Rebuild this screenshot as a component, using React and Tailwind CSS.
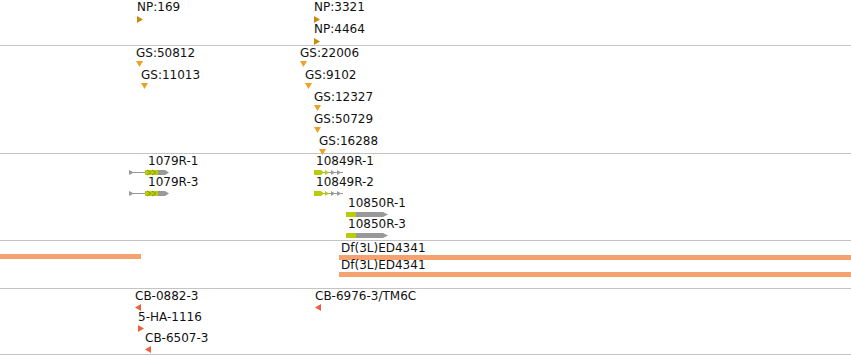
const font = { fontFamily: '"DejaVu Sans", sans-serif' }

const np = [
  { x: 137, y: 0, label: 'NP:169' },
  { x: 314, y: 0, label: 'NP:3321' },
  { x: 314, y: 22, label: 'NP:4464' }
]

const gs = [
  { x: 136, y: 0, label: 'GS:50812' },
  { x: 141, y: 22, label: 'GS:11013' },
  { x: 300, y: 0, label: 'GS:22006' },
  { x: 305, y: 22, label: 'GS:9102' },
  { x: 314, y: 44, label: 'GS:12327' },
  { x: 314, y: 66, label: 'GS:50729' },
  { x: 319, y: 88, label: 'GS:16288' }
]

const genes = [
  { x: 129, y: 0, label: '1079R-1', kind: 'a' },
  { x: 129, y: 21, label: '1079R-3', kind: 'a' },
  { x: 314, y: 0, label: '10849R-1', kind: 'b' },
  { x: 314, y: 21, label: '10849R-2', kind: 'b' },
  { x: 346, y: 42, label: '10850R-1', kind: 'c' },
  { x: 346, y: 63, label: '10850R-3', kind: 'c' }
]

const alleles = [
  { x: 135, y: 0, label: 'CB-0882-3', dir: 'left' },
  { x: 138, y: 21, label: '5-HA-1116', dir: 'right' },
  { x: 145, y: 42, label: 'CB-6507-3', dir: 'left' },
  { x: 315, y: 0, label: 'CB-6976-3/TM6C', dir: 'left' }
]

function Label({ children, className = '' }) {
  return <div className={`whitespace-nowrap text-[12px] leading-[14px] text-[#111] ${className}`}>{children}</div>
}

function RightTri({ color }) {
  return (
    <svg width="6" height="7" viewBox="0 0 6 7">
      <path d="M0 0 L6 3.5 L0 7 Z" fill={color} />
    </svg>
  )
}

function LeftTri({ color }) {
  return (
    <svg width="6" height="7" viewBox="0 0 6 7">
      <path d="M6 0 L0 3.5 L6 7 Z" fill={color} />
    </svg>
  )
}

function DownTri({ color }) {
  return (
    <svg width="7" height="6" viewBox="0 0 7 6">
      <path d="M0 0 L7 0 L3.5 6 Z" fill={color} />
    </svg>
  )
}

function GeneGlyph({ kind }) {
  if (kind === 'a') {
    return (
      <svg width="42" height="7" viewBox="0 0 42 7">
        <path d="M0 1 L5 3.5 L0 6 Z" fill="#999" />
        <rect x="3" y="3" width="14" height="1" fill="#999" />
        <rect x="16" y="1" width="13" height="5" fill="#b9cc0a" />
        <path d="M18 1 L22 3.5 L18 6 M23 1 L27 3.5 L23 6" stroke="#8a9a00" strokeWidth="1" fill="none" />
        <path d="M29 1 L36 1 L40 3.5 L36 6 L29 6 Z" fill="#999" />
      </svg>
    )
  }
  if (kind === 'b') {
    return (
      <svg width="30" height="7" viewBox="0 0 30 7">
        <path d="M0 1 L7 1 L10 3.5 L7 6 L0 6 Z" fill="#b9cc0a" />
        <rect x="9" y="3" width="20" height="1" fill="#999" />
        <path d="M11 1 L15 3.5 L11 6 Z" fill="#b9cc0a" />
        <path d="M17 1 L21 3.5 L17 6 Z M23 1 L27 3.5 L23 6 Z" fill="#999" />
      </svg>
    )
  }
  return (
    <svg width="44" height="7" viewBox="0 0 44 7">
      <rect x="0" y="1" width="10" height="5" fill="#b9cc0a" />
      <path d="M10 1 L37 1 L42 3.5 L37 6 L10 6 Z" fill="#999" />
    </svg>
  )
}

function Track({ h, children }) {
  return <div className={`relative border-b border-[#c4c4c4] ${h}`}>{children}</div>
}

export default function App() {
  return (
    <div className="h-[355px] w-[851px] overflow-hidden bg-white" style={font}>
      <Track h="h-[46px]">
        {np.map((f) => (
          <div key={f.label} className="absolute flex flex-col" style={{ left: f.x, top: f.y }}>
            <Label>{f.label}</Label>
            <div className="mt-[2px]">
              <RightTri color="#c98b0c" />
            </div>
          </div>
        ))}
      </Track>

      <Track h="h-[108px]">
        {gs.map((f) => (
          <div key={f.label} className="absolute flex flex-col" style={{ left: f.x, top: f.y }}>
            <Label>{f.label}</Label>
            <div className="mt-[1px]">
              <DownTri color="#eea124" />
            </div>
          </div>
        ))}
      </Track>

      <Track h="h-[87px]">
        {genes.map((f) => (
          <div key={f.label} className="absolute flex flex-col" style={{ left: f.x, top: f.y }}>
            <Label className={f.kind === 'a' ? 'pl-[19px]' : 'pl-[2px]'}>{f.label}</Label>
            <div className="mt-[1px]">
              <GeneGlyph kind={f.kind} />
            </div>
          </div>
        ))}
      </Track>

      <Track h="h-[48px]">
        <div className="absolute left-0 top-[13px] h-[5px] w-[141px] bg-[#f4a26f]" />
        <div className="absolute left-[339px] right-0 top-0 flex flex-col">
          <Label className="pl-[2px]">Df(3L)ED4341</Label>
          <div className="h-[5px] bg-[#f4a26f]" />
          <Label className="mt-[-2px] pl-[2px]">Df(3L)ED4341</Label>
          <div className="h-[5px] bg-[#f4a26f]" />
        </div>
      </Track>

      <Track h="h-[66px]">
        {alleles.map((f) => (
          <div key={f.label} className="absolute flex flex-col" style={{ left: f.x, top: f.y }}>
            <Label>{f.label}</Label>
            <div className="mt-[1px]">
              {f.dir === 'left' ? <LeftTri color="#f25f3c" /> : <RightTri color="#f25f3c" />}
            </div>
          </div>
        ))}
      </Track>
    </div>
  )
}
